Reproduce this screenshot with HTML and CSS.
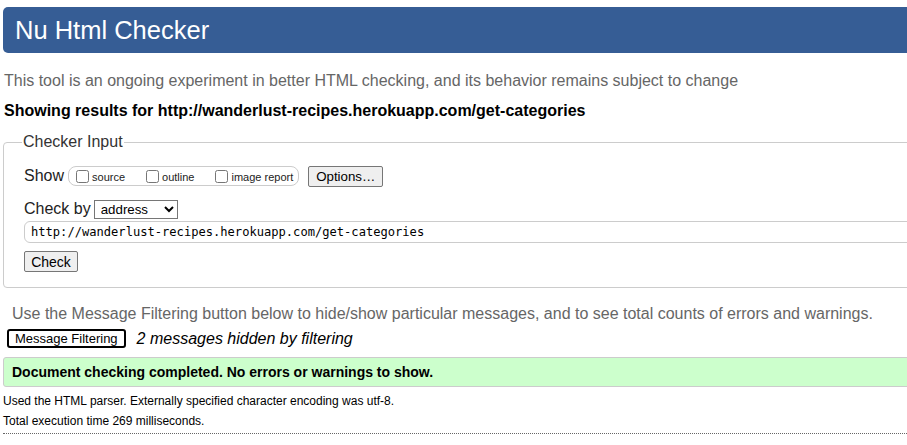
FILE: index.html
```html
<!DOCTYPE html>
<html lang="en">
<head>
<meta charset="utf-8">
<title>Showing results for http://wanderlust-recipes.herokuapp.com/get-categories - Nu Html Checker</title>
<link rel="stylesheet" href="styles.css">
</head>
<body>
<div class="page">
  <h1 class="banner">Nu Html Checker</h1>
  <p class="intro">This tool is an ongoing experiment in better HTML checking, and its behavior remains subject to change</p>
  <p class="results-for">Showing results for http://wanderlust-recipes.herokuapp.com/get-categories</p>
  <form class="checker">
    <fieldset class="checker-input">
      <legend class="legend">Checker Input</legend>
      <div class="row show-row">
        <span class="row-label">Show</span>
        <span class="show-group">
          <label class="opt"><input type="checkbox" class="cb">source</label>
          <label class="opt"><input type="checkbox" class="cb">outline</label>
          <label class="opt"><input type="checkbox" class="cb">image report</label>
        </span>
        <button type="button" class="btn options-btn">Options…</button>
      </div>
      <div class="row checkby-row">
        <span class="row-label">Check by</span>
        <select class="sel"><option>address</option></select>
      </div>
      <input type="text" class="url" value="http://wanderlust-recipes.herokuapp.com/get-categories">
      <div class="row">
        <button type="button" class="btn check-btn">Check</button>
      </div>
    </fieldset>
  </form>
  <p class="filter-hint">Use the Message Filtering button below to hide/show particular messages, and to see total counts of errors and warnings.</p>
  <div class="filter-row">
    <button type="button" class="btn filter-btn">Message Filtering</button>
    <span class="hidden-count">2 messages hidden by filtering</span>
  </div>
  <p class="success">Document checking completed. No errors or warnings to show.</p>
  <p class="details first">Used the HTML parser. Externally specified character encoding was utf-8.</p>
  <p class="details">Total execution time 269 milliseconds.</p>
  <hr class="dotted">
</div>
</body>
</html>
```
FILE: styles.css
```css
html {
  overflow: hidden;
}
body {
  margin: 0;
  padding: 7px 0 0 3px;
  font-family: "Liberation Sans", Arial, sans-serif;
  font-size: 16px;
  color: #000;
  background: #fff;
}
.page {
  margin-right: -40px;
}
.banner {
  margin: 0;
  height: 46px;
  padding: 0 12px;
  background: #365d95;
  color: #fff;
  font-weight: normal;
  font-size: 25.5px;
  line-height: 46px;
  border-radius: 5px;
}
.intro {
  margin: 15px 0 0 1px;
  color: #666;
  line-height: 26px;
}
.results-for {
  margin: 7px 0 0 1px;
  font-weight: bold;
  line-height: 20px;
}
.checker {
  margin: 12px 0 0;
}
.checker-input {
  margin: 0;
  padding: 4px 0 15px 20px;
  border: 1px solid #ccc;
  border-radius: 4px;
}
.legend {
  padding: 0 1px;
  margin-left: -2px;
  font-size: 16px;
  color: #333;
}
.row {
  display: flex;
  align-items: center;
}
.row-label {
  font-size: 16px;
  color: #222;
}
.show-row {
  height: 22px;
  margin-top: 10px;
}
.show-group {
  display: flex;
  align-items: center;
  margin-left: 4px;
  height: 18px;
  padding: 0 5px 0 7px;
  border: 1px solid #ccc;
  border-radius: 8px;
  font-size: 11px;
  color: #222;
}
.opt {
  display: flex;
  align-items: flex-end;
  margin-right: 21px;
}
.opt:last-child {
  margin-right: 0;
}
.cb {
  width: 13px;
  height: 13px;
  margin: 0 3px 0 0;
}
.btn {
  font-family: "Liberation Sans", Arial, sans-serif;
  background: #efefef;
  border: 1px solid #767676;
  border-radius: 2px;
  color: #000;
  padding: 0 6px;
}
.options-btn {
  margin-left: 9px;
  height: 21px;
  font-size: 13.3px;
  width: 75px;
}
.checkby-row {
  margin-top: 12px;
  height: 20px;
}
.sel {
  margin-left: 3px;
  width: 84px;
  height: 19px;
  font-family: "Liberation Sans", Arial, sans-serif;
  font-size: 13.3px;
  border: 1px solid #767676;
  border-radius: 0;
  padding: 0 0 0 2px;
  background: #fff;
}
.url {
  display: block;
  box-sizing: border-box;
  width: calc(100% - 20px);
  margin: 2px 0 0 0;
  height: 22px;
  padding: 0 6px;
  border: 1px solid #ccc;
  border-radius: 6px 0 0 6px;
  font-family: "DejaVu Sans Mono", "Liberation Mono", monospace;
  font-size: 12.1px;
  color: #000;
}
.check-btn {
  margin-top: 8px;
  height: 21px;
  font-size: 14px;
  width: 54px;
  padding: 0;
}
.filter-hint {
  margin: 15px 0 0 9px;
  color: #666;
  line-height: 22px;
}
.filter-row {
  display: flex;
  align-items: center;
  margin-top: 4px;
  margin-left: 4px;
}
.filter-btn {
  height: 19px;
  padding: 0 6px;
  font-size: 13px;
  border: 2px solid #000;
  border-radius: 3px;
  background: #fff;
}
.hidden-count {
  margin-left: 11px;
  font-style: italic;
  font-size: 16px;
}
.success {
  margin: 9px 0 0;
  height: 28px;
  line-height: 28px;
  padding-left: 8px;
  background: #ccffcc;
  border: 1px solid #ccc;
  border-radius: 3px 0 0 3px;
  font-weight: bold;
  font-size: 14px;
}
.details {
  margin: 4px 0 0;
  font-size: 12px;
  line-height: 16px;
}
.details.first {
  margin-top: 6px;
}
.dotted {
  margin: 4px 0 0;
  border: 0;
  border-top: 1px dotted #666;
  height: 0;
}
```
